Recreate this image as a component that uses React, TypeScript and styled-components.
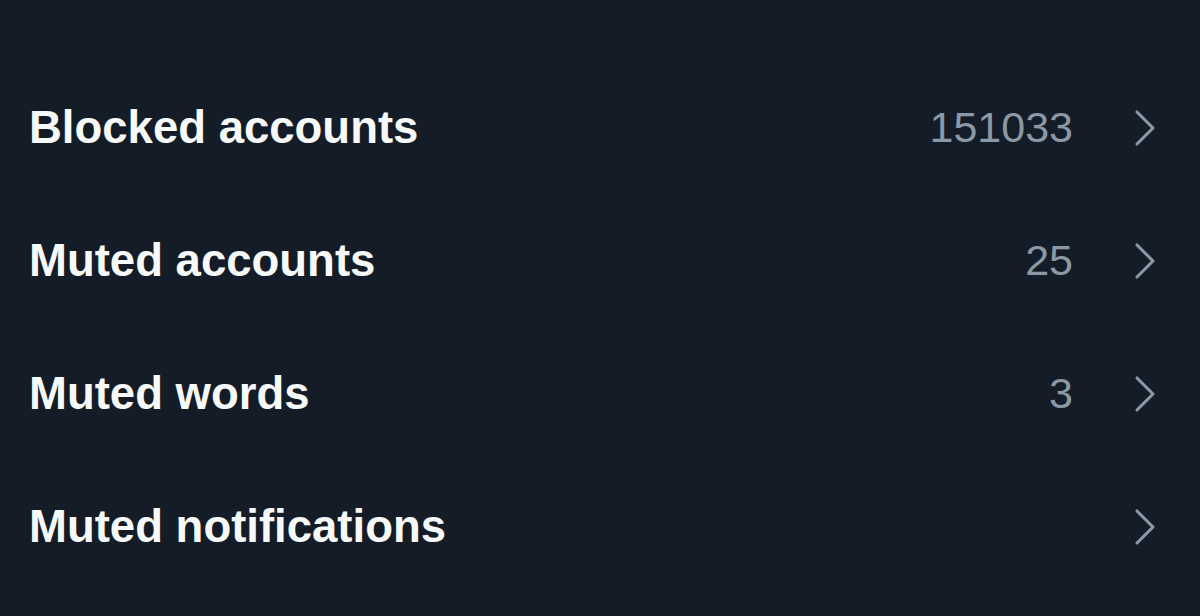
import React from 'react';
import styled, { createGlobalStyle } from 'styled-components';

const GlobalStyle = createGlobalStyle`
  html, body {
    margin: 0;
    padding: 0;
    background: #141d27;
  }
`;

const Page = styled.div`
  width: 1200px;
  height: 616px;
  background-color: #141d27;
  padding-top: 61px;
  box-sizing: border-box;
  font-family: "Liberation Sans", Arial, sans-serif;
`;

const Row = styled.div`
  display: flex;
  align-items: center;
  height: 133px;
  padding: 0 42px 0 29px;
`;

const Label = styled.div`
  flex: 1;
  color: #f7f9f9;
  font-size: 45.5px;
  font-weight: 700;
`;

const Count = styled.div`
  color: #8b98a5;
  font-size: 43px;
  font-weight: 400;
  margin-right: 59px;
`;

const Chevron = styled.svg`
  width: 26px;
  height: 38px;
  flex-shrink: 0;
`;

const items = [
  { label: 'Blocked accounts', count: '151033' },
  { label: 'Muted accounts', count: '25' },
  { label: 'Muted words', count: '3' },
  { label: 'Muted notifications', count: '' },
];

const App = () => {
  return (
    <>
      <GlobalStyle />
      <Page>
        {items.map((item) => (
          <Row key={item.label}>
            <Label>{item.label}</Label>
            {item.count && <Count>{item.count}</Count>}
            <Chevron viewBox="0 0 26 38">
              <path d="M5 3 L21 19 L5 35" fill="none" stroke="#8b98a5" strokeWidth="3.1" strokeLinecap="round" strokeLinejoin="round" />
            </Chevron>
          </Row>
        ))}
      </Page>
    </>
  );
};

export default App;
